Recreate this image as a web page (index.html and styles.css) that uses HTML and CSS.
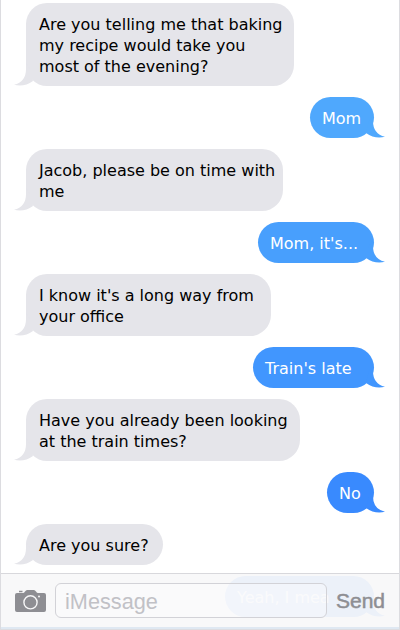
FILE: index.html
```html
<!DOCTYPE html>
<html lang="en">
    <head>
        <meta charset="UTF-8">
        <title>Messages</title>
        <link rel="stylesheet" href="styles.css">
    </head>
    <body>
        <div class="phone">
            <div class="chat">
                <div class="bubble them w268">Are you telling me that baking<br>my recipe would take you<br>most of the evening?<svg class="tail" viewBox="0 0 22 23"><path d="M12 0V6Q12 19 0 21.8Q10 24.5 19 18L16 6Z"/></svg></div>
                <div class="bubble me w64 blue1">Mom<svg class="tail" viewBox="0 0 22 23"><path d="M12 0V6Q12 19 0 21.8Q10 24.5 19 18L16 6Z"/></svg></div>
                <div class="bubble them w257">Jacob, please be on time with<br>me<svg class="tail" viewBox="0 0 22 23"><path d="M12 0V6Q12 19 0 21.8Q10 24.5 19 18L16 6Z"/></svg></div>
                <div class="bubble me w116 blue2">Mom, it's...<svg class="tail" viewBox="0 0 22 23"><path d="M12 0V6Q12 19 0 21.8Q10 24.5 19 18L16 6Z"/></svg></div>
                <div class="bubble them w245">I know it's a long way from<br>your office<svg class="tail" viewBox="0 0 22 23"><path d="M12 0V6Q12 19 0 21.8Q10 24.5 19 18L16 6Z"/></svg></div>
                <div class="bubble me w121 blue3">Train's late<svg class="tail" viewBox="0 0 22 23"><path d="M12 0V6Q12 19 0 21.8Q10 24.5 19 18L16 6Z"/></svg></div>
                <div class="bubble them w274">Have you already been looking<br>at the train times?<svg class="tail" viewBox="0 0 22 23"><path d="M12 0V6Q12 19 0 21.8Q10 24.5 19 18L16 6Z"/></svg></div>
                <div class="bubble me w47 blue4">No<svg class="tail" viewBox="0 0 22 23"><path d="M12 0V6Q12 19 0 21.8Q10 24.5 19 18L16 6Z"/></svg></div>
                <div class="bubble them w137">Are you sure?<svg class="tail" viewBox="0 0 22 23"><path d="M12 0V6Q12 19 0 21.8Q10 24.5 19 18L16 6Z"/></svg></div>
                <div class="bubble me w149 blue5">Yeah, I mea<svg class="tail" viewBox="0 0 22 23"><path d="M12 0V6Q12 19 0 21.8Q10 24.5 19 18L16 6Z"/></svg></div>
            </div>
            <div class="bar">
                <svg class="camera" viewBox="0 0 31 24">
                    <path d="M4 1.8h3.5v1.4H4zM2 4h6q1 0 2-1.5T12 1h7q1 0 2 1.5T23 4h6q2 0 2 2v15q0 2-2 2H2q-2 0-2-2V6q0-2 2-2z" fill="#8e8e93"/>
                    <circle cx="15.5" cy="13.3" r="6.6" fill="none" stroke="#f7f7f8" stroke-width="1.4"/>
                    <circle cx="24" cy="7.4" r="1" fill="#f7f7f8"/>
                </svg>
                <div class="field">iMessage</div>
                <div class="send">Send</div>
            </div>
        </div>
    </body>
</html>
```

FILE: styles.css
```css
* {
    box-sizing: border-box;
}
body {
    margin: 0;
    background-color: white;
    overflow: hidden;
}
.phone {
    position: relative;
    width: 400px;
    height: 630px;
    border: 1px solid #dcdce0;
    border-top: none;
    overflow: hidden;
}
.chat {
    display: flex;
    flex-direction: column;
    gap: 11px;
    padding: 3px 25px 0;
    font-family: "DejaVu Sans", Verdana, sans-serif;
    font-size: 16px;
    line-height: 21px;
}
.bubble {
    position: relative;
    flex-shrink: 0;
    padding: 11px 0 9px 13px;
    border-radius: 21px;
    white-space: nowrap;
}
.them {
    align-self: flex-start;
    background-color: #e5e5ea;
    color: black;
    fill: #e5e5ea;
}
.me {
    align-self: flex-end;
    padding-left: 12px;
    color: white;
}
.tail {
    position: absolute;
    left: -12px;
    bottom: 0;
    width: 22px;
    height: 23px;
}
.me .tail {
    left: auto;
    right: -11px;
    transform: scaleX(-1);
}
.w268 { width: 268px; }
.w257 { width: 257px; }
.w245 { width: 245px; }
.w274 { width: 274px; }
.w137 { width: 137px; }
.w64 { width: 64px; }
.w116 { width: 116px; }
.w121 { width: 121px; }
.w47 { width: 47px; }
.w149 { width: 149px; }
.blue1 { background-color: #4fa8fd; fill: #4fa8fd; }
.blue2 { background-color: #489ffd; fill: #489ffd; }
.blue3 { background-color: #4196fe; fill: #4196fe; }
.blue4 { background-color: #398afe; fill: #398afe; }
.blue5 { background-color: #3381fe; fill: #3381fe; }

/* translucent input bar over the end of the chat */
.bar {
    position: absolute;
    left: 0;
    right: 0;
    bottom: 0;
    height: 56px;
    display: flex;
    align-items: center;
    padding: 0 12px 0 14px;
    border-top: 1px solid #d8d8dc;
    border-bottom: 2px solid #dfe8f2;
    background-color: rgba(248, 248, 249, 0.94);
    font-family: "Liberation Sans", Arial, sans-serif;
    font-size: 21.7px;
}
.camera {
    width: 31px;
    height: 24px;
    flex-shrink: 0;
}
.field {
    width: 272px;
    height: 35px;
    margin-left: 9px;
    padding-left: 9px;
    line-height: 35px;
    border: 1px solid #d2d2d7;
    border-radius: 6px;
    background-color: rgba(255, 255, 255, 0.3);
    color: #c1c1c6;
}
.send {
    margin-left: 9px;
    color: #8e8e93;
    font-size: 21px;
    -webkit-text-stroke: 0.5px #8e8e93;
}
```
